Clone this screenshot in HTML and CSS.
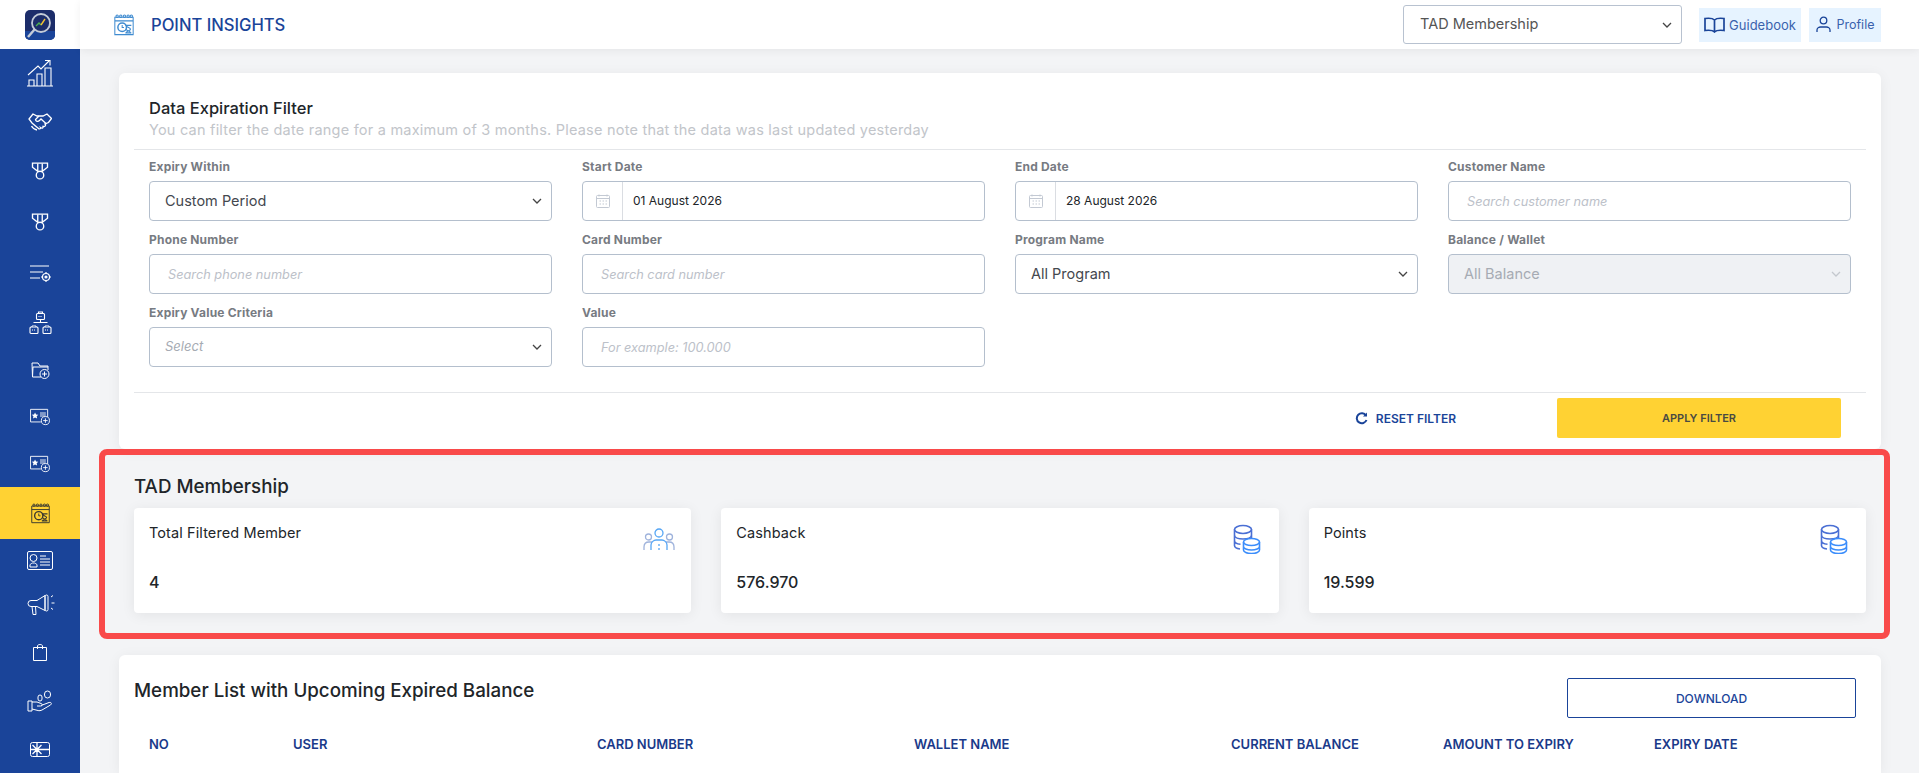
FILE: index.html
```html
<!DOCTYPE html>
<html lang="en">
<head>
    <meta charset="UTF-8">
    <title>Point Insights</title>
    <link rel="stylesheet" href="styles.css">
</head>
<body>
    <svg class="icon-defs" width="0" height="0">
        <symbol id="i-calendar" viewBox="0 0 24 24" fill="none" stroke="currentColor" stroke-width="1.100">
            <path d="M2 3.500h20v19H2zM2 7.500h20"/>
            <circle cx="4.500" cy="2.500" r="1.300"/>
            <circle cx="8.500" cy="2.500" r="1.300"/>
            <circle cx="12.500" cy="2.500" r="1.300"/>
            <circle cx="16.500" cy="2.500" r="1.300"/>
            <circle cx="20" cy="2.500" r="1.300"/>
            <circle cx="10" cy="14.500" r="4.700" stroke-width="1.600"/>
            <path d="M10 12v2.700h2"/>
            <path d="M13.500 12.500h6.500M14.500 12.500c0 2.500 4.500 2 4.500 4s-4.500 1.500-4.500 4M19 20.500c0-2.500-4.500-2-4.500-4M13.500 20.500H20" stroke-width="1.300"/>
        </symbol>
        <symbol id="i-medal" viewBox="0 0 24 24" fill="none" stroke="currentColor" stroke-width="1.800">
            <path d="M2 1.500h20v5.500l-7 5.500H9L2 7z"/>
            <path d="M9 2v10M15 2v10"/>
            <circle cx="12" cy="17.500" r="5" fill="#1a4499"/>
        </symbol>
        <symbol id="i-card-plus" viewBox="0 0 24 20" fill="none" stroke="currentColor" stroke-width="1">
            <path d="M13 15.500H1.500V1.500h19v9"/>
            <path d="M6.500 5l1.100 2.300 2.500.3-1.800 1.700.5 2.500-2.300-1.200-2.300 1.200.5-2.500-1.800-1.700 2.500-.3z" fill="currentColor" stroke="none"/>
            <path d="M12 4.500h6.500v5.500H12z" fill="currentColor" fill-opacity=".45" stroke="none"/>
            <circle cx="18" cy="14" r="4.500" fill="#1a4499"/>
            <path d="M18 11.500v5M15.500 14h5"/>
        </symbol>
        <symbol id="i-coins" viewBox="0 0 28 30" fill="none" stroke-width="1.600">
            <g stroke="#4a6fd4">
                <ellipse cx="10" cy="5.500" rx="8.500" ry="4"/>
                <path d="M1.500 5.500v16c0 1.500 2 3 5.500 3.500M18.500 5.500v9M1.500 11c0 2.500 4 4 8.500 4s8.500-1.500 8.500-4M1.500 16.500c0 2 2.500 3.500 6 3.800"/>
            </g>
            <g stroke="#3b8dfb">
                <ellipse cx="18.500" cy="18" rx="8" ry="3.500"/>
                <path d="M10.500 18v8c0 2 3.500 3.500 8 3.500s8-1.500 8-3.500v-8M10.500 22.500c0 2 3.500 3.500 8 3.500s8-1.500 8-3.500"/>
            </g>
        </symbol>
    </svg>

    <div class="app">
        <aside class="sidebar">
            <div class="sidebar-logo">
                <svg width="30" height="30" viewBox="0 0 30 30">
                    <rect width="30" height="30" rx="5" fill="#1c2d6a"/>
                    <path d="M0 21h30v4a5 5 0 0 1-5 5H5a5 5 0 0 1-5-5z" fill="#1a4499"/>
                    <circle cx="16" cy="13" r="9" fill="#1c2d6a" stroke="#c4ccd8" stroke-width="1.800"/>
                    <path d="M3 27l6.500-7.500" stroke="#c4ccd8" stroke-width="2.400"/>
                    <path d="M11 16l3-3 2 2" fill="none" stroke="#4caf50" stroke-width="1.400"/>
                    <path d="M16 15l4-6" fill="none" stroke="#f3c332" stroke-width="1.400"/>
                </svg>
            </div>
            <nav class="side-nav">
                <a class="nav-item">
                    <svg width="26" height="28" viewBox="0 0 26 28" fill="none" stroke="currentColor" stroke-width="1.100"><path d="M0 27h26M2 27v-6h5v6M10 27V15h5v12M18 27V9h6v18"/><path d="M1 16L11 7l3 3 8-8M18 1.500h5v5"/></svg>
                </a>
                <a class="nav-item">
                    <svg width="24" height="18" viewBox="0 0 24 18" fill="none" stroke="currentColor" stroke-width="1.300"><path d="M5 1L1 6l3 4 6.500 5.500c1 1 2.500 0 2-1l1 .5c1 .5 2-.5 1.500-1.500l1 0c1.500 0 2-1.500 1-2.500l3.500-1.500 3-4-4.500-4.500-4 2H9z"/><path d="M11 3L7.500 6.500c0 2 2.500 2.500 4 1l1.500-1.500 5.500 5"/><path d="M3.500 13c1 2 3 3.500 5.500 4"/></svg>
                </a>
                <a class="nav-item"><svg width="18" height="18"><use href="#i-medal"/></svg></a>
                <a class="nav-item"><svg width="18" height="18"><use href="#i-medal"/></svg></a>
                <a class="nav-item">
                    <svg width="23" height="18" viewBox="0 0 23 18" fill="none" stroke="currentColor" stroke-width="1.200"><path d="M1 1h19M1 7h13M1 13h10"/><circle cx="17" cy="12" r="3.500"/><circle cx="17" cy="12" r="1" fill="currentColor"/><path d="M17 7v1.500M17 15.500V17M12 12h1.500M20.500 12H22"/></svg>
                </a>
                <a class="nav-item">
                    <svg width="23" height="24" viewBox="0 0 23 24" fill="none" stroke="currentColor" stroke-width="1.100"><rect x="7.500" y="2.500" width="8" height="6" rx="1"/><path d="M9.500 2.500V1h4v1.500M4.500 11.500h14M11.500 9v2.500"/><rect x="1" y="16" width="8" height="6.500" rx="1"/><rect x="14" y="16" width="8" height="6.500" rx="1"/><path d="M3 16v-1.500h4V16M16 16v-1.500h4V16M3 19h4M16 19h4M9.500 5.500h4" stroke-dasharray="1 1"/></svg>
                </a>
                <a class="nav-item">
                    <svg width="19" height="17" viewBox="0 0 19 17" fill="none" stroke="currentColor" stroke-width="1"><path d="M10 15H1.500L1 1h6l2 3h8v4"/><path d="M1.500 15L2 5h15"/><circle cx="13.500" cy="12" r="4.500"/><path d="M13.500 9.500v5M11 12h5"/></svg>
                </a>
                <a class="nav-item"><svg width="22" height="18"><use href="#i-card-plus"/></svg></a>
                <a class="nav-item"><svg width="22" height="18"><use href="#i-card-plus"/></svg></a>
                <a class="nav-item active"><svg width="21" height="21"><use href="#i-calendar"/></svg></a>
                <a class="nav-item">
                    <svg width="26" height="19" viewBox="0 0 26 19" fill="none" stroke="currentColor" stroke-width="1"><rect x=".5" y=".5" width="25" height="18" rx="1.500"/><circle cx="6.500" cy="7" r="3.500"/><path d="M3 16v-2c0-1 1.500-1.500 2.500-2h2c1 .5 2.500 1 2.500 2v2zM13 5h6M13 8h10M13 11h10M13 14h10"/></svg>
                </a>
                <a class="nav-item">
                    <svg width="29" height="21" viewBox="0 0 29 21" fill="none" stroke="currentColor" stroke-width="1"><path d="M5 6.500h6L19 1.500v15l-8-4H5a3 3 0 0 1 0-6z"/><rect x="19" y="1" width="3" height="16" rx="1.500"/><path d="M6 12.500l1 8h3l-.5-8M25 3l2-1.500M25.500 9h3M25 14l2 1.500"/></svg>
                </a>
                <a class="nav-item">
                    <svg width="14" height="17" viewBox="0 0 14 17" fill="none" stroke="currentColor" stroke-width="1"><path d="M.5 3.500h13v13H.5zM4.500 5V2c0-2 5-2 5 0v3"/></svg>
                </a>
                <a class="nav-item">
                    <svg width="26" height="22" viewBox="0 0 26 22" fill="none" stroke="currentColor" stroke-width="1"><path d="M1 11h4v10H1zM5 12h5l4 1.500c2 .5 1.500 2.500-.5 2.500H10M14 15.500l8-3c2.500-.5 3 1 1.500 2.500L15 20c-1 .5-3 1-4 .5L5 19"/><rect x="17.500" y="1" width="6" height="7" rx="3"/><rect x="11" y="5" width="4" height="6" rx="2"/></svg>
                </a>
                <a class="nav-item">
                    <svg width="20" height="15" viewBox="0 0 20 15" fill="none" stroke="currentColor" stroke-width="1"><rect x=".5" y=".5" width="19" height="14" rx="2"/><path d="M1 7.500h18M7 1v13M2.500 3L7 7.500 11.500 3M2.500 12L7 7.500l4.500 4.500" stroke-width="1.300"/></svg>
                </a>
            </nav>
        </aside>

        <div class="main">
            <header class="topbar">
                <div class="topbar-title">
                    <svg class="topbar-icon" width="22" height="22"><use href="#i-calendar"/></svg>
                    <h1>POINT INSIGHTS</h1>
                </div>
                <div class="topbar-actions">
                    <select class="program-select">
                        <option>TAD Membership</option>
                    </select>
                    <a class="top-link guidebook-link">
                        <svg width="21" height="16" viewBox="0 0 21 16" fill="none" stroke="#1a4499" stroke-width="1.700"><path d="M10.500 3C9 1.500 5 1 1 1.500v12c4-.5 8 0 9.500 1.500 1.500-1.500 5.500-2 9.500-1.500v-12C16 1 12 1.500 10.500 3zM10.500 3v12"/></svg>
                        Guidebook
                    </a>
                    <a class="top-link profile-link">
                        <svg width="15" height="17" viewBox="0 0 15 17" fill="none" stroke="#1a4499" stroke-width="1.300"><circle cx="7.500" cy="4.500" r="3.300"/><path d="M1 16v-2c0-2 2-3 3.500-3h6c1.500 0 3.500 1 3.500 3v2"/></svg>
                        Profile
                    </a>
                </div>
            </header>

            <div class="content">
                <section class="card filter-card">
                    <div class="card-head">
                        <h2>Data Expiration Filter</h2>
                        <p>You can filter the date range for a maximum of 3 months. Please note that the data was last updated yesterday</p>
                    </div>
                    <form class="filter-grid">
                        <div class="field">
                            <label>Expiry Within</label>
                            <select class="control"><option>Custom Period</option></select>
                        </div>
                        <div class="field">
                            <label>Start Date</label>
                            <div class="date-control">
                                <span class="date-addon">
                                    <svg width="14" height="14" viewBox="0 0 14 14" fill="none" stroke="#c3c9d3" stroke-width="1"><rect x=".5" y="1.500" width="13" height="12" rx="1"/><path d="M.5 4.500h13M3 .5v2M11 .5v2M3.500 7h1.500M6.500 7H8M9.500 7H11M3.500 10h1.500M6.500 10H8M9.500 10H11"/></svg>
                                </span>
                                <input type="text" value="01 August 2026">
                            </div>
                        </div>
                        <div class="field">
                            <label>End Date</label>
                            <div class="date-control">
                                <span class="date-addon">
                                    <svg width="14" height="14" viewBox="0 0 14 14" fill="none" stroke="#c3c9d3" stroke-width="1"><rect x=".5" y="1.500" width="13" height="12" rx="1"/><path d="M.5 4.500h13M3 .5v2M11 .5v2M3.500 7h1.500M6.500 7H8M9.500 7H11M3.500 10h1.500M6.500 10H8M9.500 10H11"/></svg>
                                </span>
                                <input type="text" value="28 August 2026">
                            </div>
                        </div>
                        <div class="field">
                            <label>Customer Name</label>
                            <input class="control" type="text" placeholder="Search customer name">
                        </div>
                        <div class="field">
                            <label>Phone Number</label>
                            <input class="control" type="text" placeholder="Search phone number">
                        </div>
                        <div class="field">
                            <label>Card Number</label>
                            <input class="control" type="text" placeholder="Search card number">
                        </div>
                        <div class="field">
                            <label>Program Name</label>
                            <select class="control"><option>All Program</option></select>
                        </div>
                        <div class="field">
                            <label>Balance / Wallet</label>
                            <select class="control" disabled><option>All Balance</option></select>
                        </div>
                        <div class="field">
                            <label>Expiry Value Criteria</label>
                            <select class="control placeholder-select"><option>Select</option></select>
                        </div>
                        <div class="field">
                            <label>Value</label>
                            <input class="control" type="text" placeholder="For example: 100.000">
                        </div>
                    </form>
                    <div class="filter-actions">
                        <button class="btn-reset" type="button">
                            <svg width="13" height="13" viewBox="0 0 13 13" fill="none" stroke="currentColor" stroke-width="2"><path d="M11 3.500A5 5 0 1 0 11.500 8"/><path d="M12 .5v4H8" fill="currentColor" stroke="none"/></svg>
                            RESET FILTER
                        </button>
                        <button class="btn-apply" type="button">APPLY FILTER</button>
                    </div>
                </section>

                <section class="summary">
                    <h3>TAD Membership</h3>
                    <div class="summary-grid">
                        <div class="stat-card">
                            <span class="stat-label">Total Filtered Member</span>
                            <svg class="stat-icon users-icon" width="32" height="23" viewBox="0 0 32 23" fill="none" stroke-width="1.300">
                                <g stroke="#9fb3dc"><circle cx="5.500" cy="9" r="3"/><circle cx="26.500" cy="9" r="3"/><path d="M1 22v-3c0-3 2-5 5-5h3M31 22v-3c0-3-2-5-5-5h-3"/></g>
                                <g stroke="#56a6f5"><circle cx="16" cy="5" r="4"/><path d="M8 22v-5c0-3 3-5 5-5h6c2 0 5 2 5 5v5"/><path d="M16 16v2M16 20v2"/></g>
                            </svg>
                            <strong class="stat-value">4</strong>
                        </div>
                        <div class="stat-card">
                            <span class="stat-label">Cashback</span>
                            <svg class="stat-icon coins-icon" width="28" height="30"><use href="#i-coins"/></svg>
                            <strong class="stat-value">576.970</strong>
                        </div>
                        <div class="stat-card">
                            <span class="stat-label">Points</span>
                            <svg class="stat-icon coins-icon" width="28" height="30"><use href="#i-coins"/></svg>
                            <strong class="stat-value">19.599</strong>
                        </div>
                    </div>
                </section>

                <section class="card list-card">
                    <div class="list-head">
                        <h2>Member List with Upcoming Expired Balance</h2>
                        <button class="btn-download" type="button">DOWNLOAD</button>
                    </div>
                    <table class="member-table">
                        <thead>
                            <tr>
                                <th class="col-no">NO</th>
                                <th class="col-user">USER</th>
                                <th class="col-card">CARD NUMBER</th>
                                <th class="col-wallet">WALLET NAME</th>
                                <th class="col-balance">CURRENT BALANCE</th>
                                <th class="col-amount">AMOUNT TO EXPIRY</th>
                                <th>EXPIRY DATE</th>
                            </tr>
                        </thead>
                    </table>
                </section>
            </div>
        </div>
    </div>
</body>
</html>
```

FILE: styles.css
```css
* {
    box-sizing: border-box;
}
html, body {
    margin: 0;
    height: 100%;
    overflow: hidden;
}
body {
    font-family: Inter, "Open Sans", sans-serif;
    background-color: #f3f4f6;
    color: #212529;
}
.icon-defs {
    position: absolute;
}
.app {
    display: flex;
    height: 773px;
    overflow: hidden;
}

/* sidebar */
.sidebar {
    width: 80px;
    flex-shrink: 0;
    background-color: #1a4499;
    display: flex;
    flex-direction: column;
}
.sidebar-logo {
    height: 49px;
    flex-shrink: 0;
    background-color: #fff;
    display: flex;
    align-items: center;
    justify-content: center;
}
.side-nav {
    display: grid;
    grid-template-rows: 48px 49px 50px 52px 51px 47px 48px 46px 47px 52px 42px 47px 48px 50px 47px;
}
.nav-item {
    display: flex;
    align-items: center;
    justify-content: center;
    color: #fff;
}
.nav-item.active {
    background-color: #ffd233;
    color: #3b3a30;
}

/* top bar */
.main {
    flex: 1;
    min-width: 0;
}
.topbar {
    height: 49px;
    background-color: #fff;
    box-shadow: 0 2px 8px rgba(0, 0, 0, 0.06);
    display: flex;
    align-items: center;
    justify-content: space-between;
    padding: 0 38px 0 33px;
}
.topbar-title {
    display: flex;
    align-items: center;
    gap: 16px;
}
.topbar-icon {
    color: #3f8bd0;
}
.topbar-title h1 {
    margin: 0;
    font-size: 16.6px;
    font-weight: 500;
    color: #1a4499;
}
.topbar-actions {
    display: flex;
    align-items: center;
    gap: 8px;
}
.program-select {
    width: 279px;
    height: 39px;
    margin-right: 9px;
    padding: 0 28px 2px 16px;
    appearance: none;
    font: inherit;
    font-size: 14.5px;
    color: #555;
    background: #fff url("data:image/svg+xml,%3Csvg xmlns='http://www.w3.org/2000/svg' width='10' height='6'%3E%3Cpath d='M1 1l4 4 4-4' fill='none' stroke='%23444' stroke-width='1.300'/%3E%3C/svg%3E") no-repeat right 9px center;
    border: 1px solid #b8c2d0;
    border-radius: 3px;
}
.top-link {
    height: 34px;
    display: flex;
    align-items: center;
    justify-content: center;
    gap: 4px;
    color: #3a62ad;
    background-color: #e6f3ff;
}
.guidebook-link {
    width: 102px;
    font-size: 13px;
}
.profile-link {
    width: 72px;
    gap: 6px;
    font-size: 12.5px;
}

/* cards */
.content {
    padding: 24px 38px 0 39px;
}
.card {
    background-color: #fff;
    border-radius: 6px;
    box-shadow: 0 2px 14px rgba(0, 0, 0, 0.06);
}
.card-head {
    padding: 23px 15px 9px;
    border-bottom: 1px solid #e4e6e9;
    margin: 0 15px;
}
.card-head h2 {
    margin: 0;
    font-size: 16.5px;
    line-height: 24px;
    font-weight: 500;
}
.card-head p {
    margin: 0;
    font-size: 14.5px;
    letter-spacing: 0.22px;
    line-height: 20px;
    color: #c2c5ca;
}
.filter-grid {
    display: grid;
    grid-template-columns: repeat(4, 403px);
    column-gap: 30px;
    row-gap: 9px;
    padding: 7px 30px 25px;
}
.field label {
    display: block;
    height: 18px;
    margin-bottom: 6px;
    font-size: 12px;
    letter-spacing: 0.2px;
    line-height: 20px;
    font-weight: 700;
    color: #777b82;
}
.control {
    width: 100%;
    height: 40px;
    padding: 0 18px 2px;
    font: inherit;
    font-size: 14.5px;
    color: #44484f;
    background-color: #fff;
    border: 1px solid #b4bfcd;
    border-radius: 4px;
}
.control::placeholder {
    font-size: 12.75px;
    font-style: italic;
    color: #bcc1c9;
}
select.control {
    padding: 0 28px 2px 15px;
    appearance: none;
    background: #fff url("data:image/svg+xml,%3Csvg xmlns='http://www.w3.org/2000/svg' width='10' height='6'%3E%3Cpath d='M1 1l4 4 4-4' fill='none' stroke='%23444' stroke-width='1.300'/%3E%3C/svg%3E") no-repeat right 9px center;
}
select.control:disabled {
    background: #eff1f4 url("data:image/svg+xml,%3Csvg xmlns='http://www.w3.org/2000/svg' width='10' height='6'%3E%3Cpath d='M1 1l4 4 4-4' fill='none' stroke='%23c4c8ce' stroke-width='1.300'/%3E%3C/svg%3E") no-repeat right 9px center;
    color: #a6abb3;
    opacity: 1;
}
select.placeholder-select {
    font-style: italic;
    font-size: 13px;
    color: #a6abb3;
}
.date-control {
    display: flex;
    height: 40px;
    background-color: #fff;
    border: 1px solid #b4bfcd;
    border-radius: 4px;
}
.date-addon {
    width: 40px;
    flex-shrink: 0;
    display: flex;
    align-items: center;
    justify-content: center;
    border-right: 1px solid #dadde2;
}
.date-control input {
    flex: 1;
    min-width: 0;
    padding: 0 10px 2px;
    border: 0;
    background: transparent;
    font: inherit;
    font-size: 12px;
    color: #212529;
}
.filter-actions {
    display: flex;
    align-items: flex-start;
    justify-content: flex-end;
    height: 57px;
    margin: 0 15px;
    padding: 5px 25px 0 0;
    border-top: 1px solid #e4e6e9;
}
.filter-actions button {
    border: none;
    font: inherit;
    font-size: 12px;
    font-weight: 600;
    cursor: pointer;
}
.btn-reset {
    display: flex;
    align-items: center;
    gap: 8px;
    height: 40px;
    margin-right: 101px;
    padding: 0;
    background: transparent;
    color: #1a4499;
}
.filter-actions .btn-apply {
    width: 284px;
    height: 40px;
    border-radius: 2px;
    background-color: #ffd233;
    color: #4a4a42;
    font-size: 11px;
}

/* summary block with the red frame */
.summary {
    margin: 0 -9px 16px -20px;
    padding: 18px 18px 20px 29px;
    border: 6px solid #f94a4a;
    border-radius: 8px;
}
.summary h3 {
    margin: 0 0 7px;
    font-size: 18.75px;
    line-height: 28px;
    font-weight: 500;
}
.summary-grid {
    display: grid;
    grid-template-columns: repeat(3, 1fr);
    gap: 30px;
}
.stat-card {
    height: 105px;
    display: grid;
    grid-template-columns: 1fr auto;
    grid-template-rows: 49px auto;
    padding: 14px 16px 0 15px;
    background-color: #fff;
    border-radius: 4px;
    box-shadow: 0 2px 14px rgba(0, 0, 0, 0.07);
}
.stat-label {
    font-size: 14.5px;
    letter-spacing: 0.1px;
    line-height: 22px;
}
.stat-icon {
    display: block;
}
.users-icon {
    margin-top: 6px;
}
.coins-icon {
    margin-top: 2px;
    margin-right: 2px;
}
.stat-value {
    grid-column: 1 / -1;
    font-size: 16px;
    line-height: 22px;
    font-weight: 500;
}

/* member list */
.list-card {
    height: 118px;
    padding: 23px 25px 0 15px;
    border-radius: 6px 6px 0 0;
}
.list-head {
    display: flex;
    align-items: flex-start;
    justify-content: space-between;
}
.list-head h2 {
    margin: 0;
    font-size: 18.75px;
    line-height: 26px;
    font-weight: 500;
}
.btn-download {
    width: 289px;
    height: 40px;
    background-color: #fff;
    border: 1px solid #1a4499;
    border-radius: 2px;
    font: inherit;
    font-size: 12px;
    font-weight: 500;
    color: #1a4499;
}
.member-table {
    width: 100%;
    margin-top: 14px;
    border-collapse: collapse;
    table-layout: fixed;
}
.member-table th {
    height: 24px;
    padding: 0 0 0 15px;
    text-align: left;
    font-size: 13px;
    font-weight: 600;
    color: #1a3a8a;
}
.col-no { width: 144px; }
.col-user { width: 304px; }
.col-card { width: 317px; }
.col-wallet { width: 317px; }
.col-balance { width: 212px; }
.col-amount { width: 211px; }
```
